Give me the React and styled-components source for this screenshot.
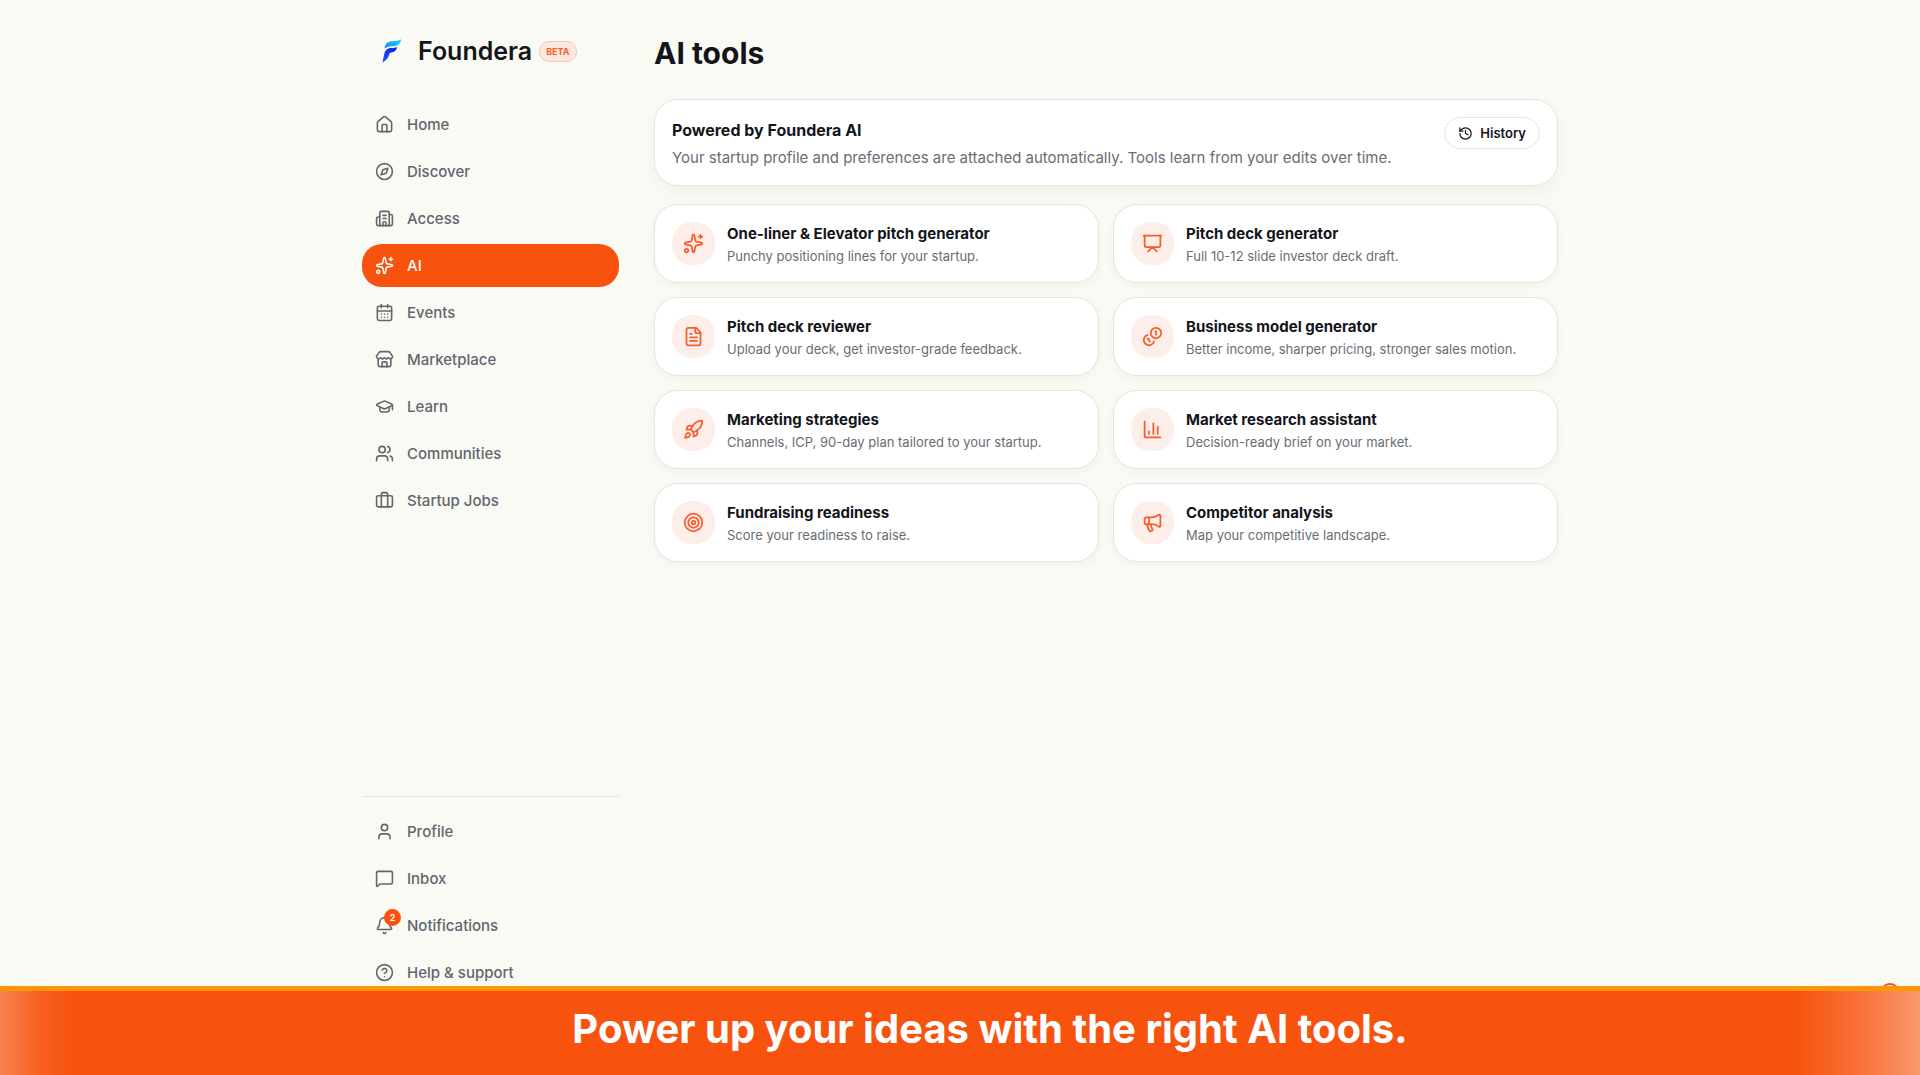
import styled, { createGlobalStyle, css } from "styled-components";
import {
  Bell,
  Briefcase,
  Building2,
  CalendarDays,
  ChartColumn,
  CircleHelp,
  Compass,
  FileText,
  GraduationCap,
  History,
  House,
  Megaphone,
  MessageSquare,
  Presentation,
  Rocket,
  Sparkles,
  Store,
  Target,
  User,
  Users,
} from "lucide-react";

// smaller coin sits behind, at the lower left
const CoinPair = ({ size }) => (
  <svg
    width={size}
    height={size}
    viewBox="0 0 24 24"
    fill="none"
    stroke="currentColor"
    strokeWidth="2"
    strokeLinecap="round"
    strokeLinejoin="round"
    aria-hidden="true"
  >
    <path d="M13.744 17.736a6 6 0 1 1-7.48-7.48" />
    <path d="M15 6h1v4" />
    <path d="m6.134 14.768.866-.5 2 3.464" />
    <circle cx="16" cy="8" r="6" />
  </svg>
);

const mainLinks = [
  { label: "Home", icon: House },
  { label: "Discover", icon: Compass },
  { label: "Access", icon: Building2 },
  { label: "AI", icon: Sparkles, active: true },
  { label: "Events", icon: CalendarDays },
  { label: "Marketplace", icon: Store },
  { label: "Learn", icon: GraduationCap },
  { label: "Communities", icon: Users },
  { label: "Startup Jobs", icon: Briefcase },
];

const accountLinks = [
  { label: "Profile", icon: User },
  { label: "Inbox", icon: MessageSquare },
  { label: "Notifications", icon: Bell, count: 2 },
  { label: "Help & support", icon: CircleHelp },
];

const tools = [
  {
    title: "One-liner & Elevator pitch generator",
    text: "Punchy positioning lines for your startup.",
    icon: Sparkles,
  },
  {
    title: "Pitch deck generator",
    text: "Full 10-12 slide investor deck draft.",
    icon: Presentation,
  },
  {
    title: "Pitch deck reviewer",
    text: "Upload your deck, get investor-grade feedback.",
    icon: FileText,
  },
  {
    title: "Business model generator",
    text: "Better income, sharper pricing, stronger sales motion.",
    icon: CoinPair,
  },
  {
    title: "Marketing strategies",
    text: "Channels, ICP, 90-day plan tailored to your startup.",
    icon: Rocket,
  },
  {
    title: "Market research assistant",
    text: "Decision-ready brief on your market.",
    icon: ChartColumn,
  },
  {
    title: "Fundraising readiness",
    text: "Score your readiness to raise.",
    icon: Target,
  },
  {
    title: "Competitor analysis",
    text: "Map your competitive landscape.",
    icon: Megaphone,
  },
];

const Logo = () => (
  <svg width="20" height="24" viewBox="0 0 20 24" aria-hidden="true">
    <defs>
      <linearGradient id="wing" x1="0" y1="1" x2="1" y2="0">
        <stop offset="0" stopColor="#0a7cf5" />
        <stop offset="1" stopColor="#1fe3fb" />
      </linearGradient>
      <linearGradient id="stem" x1="0" y1="1" x2="1" y2="0">
        <stop offset="0" stopColor="#1a5cff" />
        <stop offset="1" stopColor="#1414d8" />
      </linearGradient>
    </defs>
    <path
      d="M2.6 9.6C3 5 5.4 2.6 9.4 2.2C13 1.9 16.4 1.9 19.4 0.3C18.6 4.6 16.2 6.7 12.4 7C8.6 7.2 5.2 7.4 2.6 9.6Z"
      fill="url(#wing)"
    />
    <path
      d="M0.4 23.4C1.4 19.4 1.8 16.4 2.6 13.6C3.6 10.4 6 9.2 9.2 9C11.6 8.9 13.4 8.8 15.2 8.2C14.2 11.6 12.4 13.2 9.4 13.6C8.2 13.7 7.6 14.2 7.2 15.4C6.2 19.2 3.8 21.8 0.4 23.4Z"
      fill="url(#stem)"
    />
  </svg>
);

const NavItem = ({ item }) => {
  const Icon = item.icon;
  return (
    <NavLink href="#" $active={item.active}>
      <IconSlot>
        <Icon size={19} strokeWidth={2} />
        {item.count && <Count>{item.count}</Count>}
      </IconSlot>
      <span>{item.label}</span>
    </NavLink>
  );
};

const App = () => {
  return (
    <>
      <GlobalStyle />
      <Page>
        <Sidebar>
          <Brand href="#">
            <Logo />
            <BrandName>Foundera</BrandName>
            <Beta>BETA</Beta>
          </Brand>
          <Nav aria-label="Main">
            {mainLinks.map((item) => (
              <NavItem key={item.label} item={item} />
            ))}
          </Nav>
          <AccountNav aria-label="Account">
            {accountLinks.map((item) => (
              <NavItem key={item.label} item={item} />
            ))}
          </AccountNav>
        </Sidebar>

        <Main>
          <PageTitle>AI tools</PageTitle>
          <Intro>
            <div>
              <IntroTitle>Powered by Foundera AI</IntroTitle>
              <IntroText>
                Your startup profile and preferences are attached automatically.
                Tools learn from your edits over time.
              </IntroText>
            </div>
            <HistoryButton type="button">
              <History size={15} />
              History
            </HistoryButton>
          </Intro>
          <ToolGrid>
            {tools.map(({ title, text, icon: Icon }) => (
              <ToolCard href="#" key={title}>
                <ToolIcon>
                  <Icon size={21} />
                </ToolIcon>
                <div>
                  <ToolTitle>{title}</ToolTitle>
                  <ToolText>{text}</ToolText>
                </div>
              </ToolCard>
            ))}
          </ToolGrid>
        </Main>
      </Page>
      <HelpBubble type="button" aria-label="Open chat" />
      <Banner>Power up your ideas with the right AI tools.</Banner>
    </>
  );
};
export default App;

const GlobalStyle = createGlobalStyle`
  * {
    box-sizing: border-box;
  }
  body {
    margin: 0;
    background-color: #f9faf4;
    color: #14151a;
    font-family: Inter, "Liberation Sans", sans-serif;
  }
  h1, h2, h3, p {
    margin: 0;
  }
  a {
    color: inherit;
    text-decoration: none;
  }
  svg {
    display: block;
    flex-shrink: 0;
  }
`;
const Page = styled.div`
  display: grid;
  grid-template-columns: 257px minmax(0, 1fr);
  gap: 35px;
  max-width: 1196px;
  min-height: 100vh;
  margin: 0 auto;
`;
const Sidebar = styled.aside`
  display: flex;
  flex-direction: column;
  padding: 32px 0 81px;
`;
const Brand = styled.a`
  display: flex;
  align-items: center;
  height: 38px;
  padding-left: 20px;
`;
const BrandName = styled.span`
  margin-left: 16px;
  font-size: 25px;
  font-weight: 600;
`;
const Beta = styled.span`
  margin-left: 7px;
  padding: 0 6px;
  border: 1px solid #fbc4b2;
  border-radius: 10px;
  background-color: #fce8e0;
  color: #fb5a2a;
  font-size: 9px;
  font-weight: 700;
  line-height: 19px;
`;
const Nav = styled.nav`
  display: flex;
  flex-direction: column;
  gap: 4px;
  margin-top: 33px;
`;
const AccountNav = styled(Nav)`
  margin-top: auto;
  padding-top: 13px;
  border-top: 1px solid #e6e7e0;
`;
const NavLink = styled.a`
  display: flex;
  align-items: center;
  gap: 13px;
  height: 43px;
  padding: 0 13px;
  border-radius: 20px;
  color: #62666d;
  font-size: 15px;
  font-weight: 500;
  ${({ $active }) =>
    $active &&
    css`
      background-color: #f7530e;
      color: #fff;
    `}
`;
const IconSlot = styled.span`
  position: relative;
`;
const Count = styled.span`
  position: absolute;
  top: -7px;
  right: -7px;
  width: 17px;
  height: 17px;
  border-radius: 50%;
  background-color: #fa5010;
  color: #fff;
  font-size: 9px;
  font-weight: 600;
  line-height: 17px;
  text-align: center;
`;
const Main = styled.main`
  padding: 32px 0 110px;
`;
const PageTitle = styled.h1`
  font-size: 30px;
  font-weight: 700;
  line-height: 42px;
`;
const Intro = styled.section`
  display: flex;
  justify-content: space-between;
  align-items: flex-start;
  gap: 16px;
  margin-top: 25px;
  padding: 17px;
  border: 1px solid #e6e6dd;
  border-radius: 24px;
  background-color: #fff;
  box-shadow: 0 6px 16px rgba(60, 50, 20, 0.04);
`;
const IntroTitle = styled.h2`
  font-size: 16px;
  font-weight: 700;
  line-height: 26px;
`;
const IntroText = styled.p`
  margin-top: 4px;
  color: #696d73;
  font-size: 15px;
  line-height: 21px;
`;
const HistoryButton = styled.button`
  display: flex;
  align-items: center;
  gap: 7px;
  height: 32px;
  padding: 0 13px;
  border: 1px solid #e6e6e0;
  border-radius: 16px;
  background-color: #fff;
  color: #14151a;
  font-family: inherit;
  font-size: 13px;
  font-weight: 600;
  cursor: pointer;
`;
const ToolGrid = styled.div`
  display: grid;
  grid-template-columns: repeat(auto-fit, minmax(360px, 1fr));
  gap: 14px;
  margin-top: 18px;
`;
const ToolCard = styled.a`
  display: flex;
  align-items: center;
  gap: 12px;
  padding: 17px;
  border: 1px solid #e6e6dd;
  border-radius: 24px;
  background-color: #fff;
  box-shadow: 0 3px 8px rgba(60, 50, 20, 0.04);
`;
const ToolIcon = styled.span`
  display: flex;
  flex-shrink: 0;
  align-items: center;
  justify-content: center;
  width: 43px;
  height: 43px;
  border-radius: 20px;
  background-color: #fdeeea;
  color: #fb5a2a;
`;
const ToolTitle = styled.h3`
  font-size: 15px;
  font-weight: 700;
  line-height: 24px;
`;
const ToolText = styled.p`
  margin-top: 1px;
  color: #696d73;
  font-size: 13px;
  line-height: 18px;
`;
const HelpBubble = styled.button`
  position: fixed;
  right: 20px;
  bottom: 72px;
  width: 20px;
  height: 20px;
  padding: 0;
  border: 2px solid #f0522e;
  border-radius: 50%;
  background-color: #fff;
`;
const Banner = styled.footer`
  position: fixed;
  right: 0;
  bottom: 0;
  left: 0;
  padding: 9px 0 17px 60px;
  border-top: 5px solid #ff9608;
  background: linear-gradient(
      to right,
      rgba(255, 255, 255, 0.27),
      rgba(255, 255, 255, 0.08) 40px,
      rgba(255, 255, 255, 0) 75px
    ),
    linear-gradient(
      to left,
      rgba(255, 255, 255, 0.4),
      rgba(255, 255, 255, 0.16) 65px,
      rgba(255, 255, 255, 0) 125px
    ),
    #f7530e;
  color: #fff;
  font-size: 40px;
  font-weight: 700;
  line-height: 58px;
  text-align: center;
`;
